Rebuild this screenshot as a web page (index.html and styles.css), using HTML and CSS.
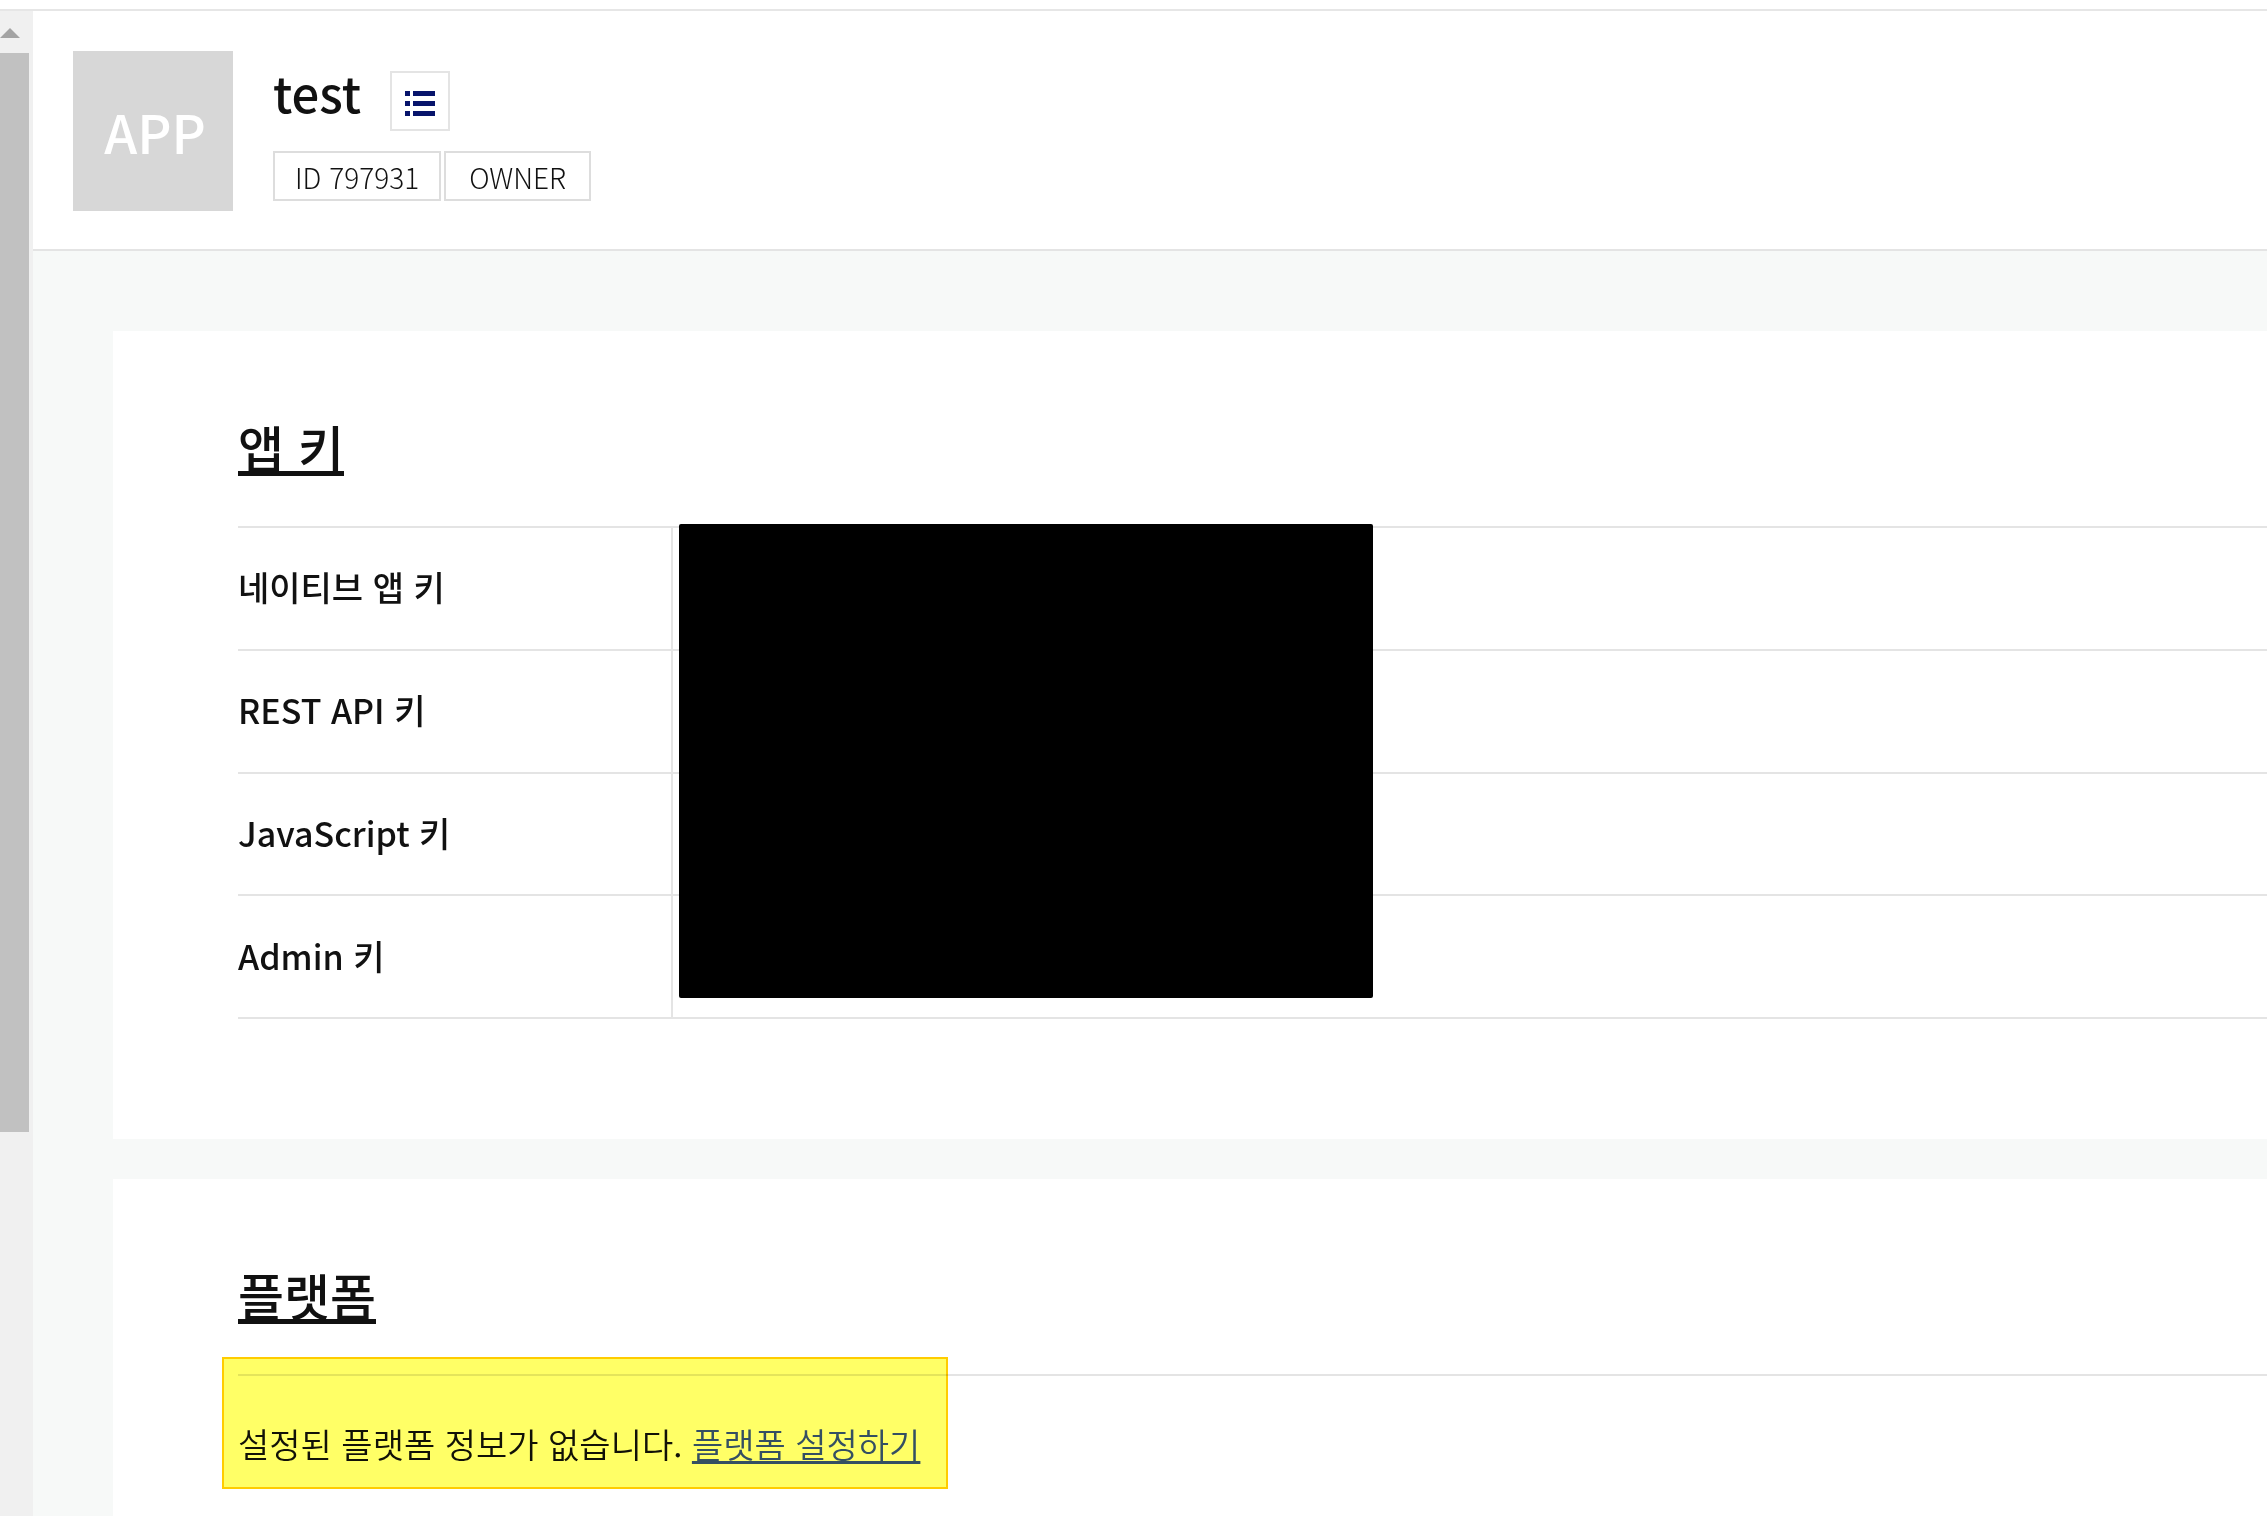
FILE: index.html
```html
<!DOCTYPE html>
<html lang="ko">
<head>
    <meta charset="UTF-8">
    <meta name="viewport" content="width=device-width, initial-scale=1.0">
    <title>test</title>
    <link rel="stylesheet" href="styles.css">
</head>
<body>
    <div class="topbar"></div>
    <div class="layout">
        <!-- Scroll track of the side menu -->
        <div class="scroll-track">
            <svg class="scroll-arrow" viewBox="0 0 20 10" width="20" height="10"><path d="M0 10 L10 0 L20 10 Z" fill="#a3a3a3"/></svg>
            <div class="scroll-thumb"></div>
        </div>

        <div class="content">
            <header class="app-header">
                <div class="app-icon">APP</div>
                <div class="app-info">
                    <div class="title-row">
                        <h1>test</h1>
                        <button type="button" class="list-btn" aria-label="앱 목록">
                            <svg viewBox="0 0 30 25" width="30" height="25" fill="#07146b">
                                <path d="M0 0h5v5H0zM8 0h22v5H8zM0 10h5v5H0zM8 10h22v5H8zM0 20h5v5H0zM8 20h22v5H8z"/>
                            </svg>
                        </button>
                    </div>
                    <div class="badges">
                        <span class="badge">ID 797931</span>
                        <span class="badge">OWNER</span>
                    </div>
                </div>
            </header>

            <main>
                <!-- App keys -->
                <section class="card">
                    <h2><a href="#keys">앱 키</a></h2>
                    <div class="key-box">
                        <table>
                            <tr><th scope="row">네이티브 앱 키</th><td></td></tr>
                            <tr><th scope="row">REST API 키</th><td></td></tr>
                            <tr><th scope="row">JavaScript 키</th><td></td></tr>
                            <tr><th scope="row">Admin 키</th><td></td></tr>
                        </table>
                        <div class="key-mask"></div>
                    </div>
                </section>

                <!-- Platform -->
                <section class="card card-last">
                    <h2><a href="#platform">플랫폼</a></h2>
                    <div class="platform">
                        <p class="notice">설정된 플랫폼 정보가 없습니다. <a href="#platform-setting">플랫폼 설정하기</a></p>
                    </div>
                </section>
            </main>
        </div>
    </div>
</body>
</html>
```
FILE: styles.css
```css
:root {
    --line-color: #e4e4e4;
    --text-color: #111111;
    --bg-color: #f7f9f8;
}

* {
    box-sizing: border-box;
}

body {
    font-family: 'Noto Sans CJK KR', 'Noto Sans', sans-serif;
    color: var(--text-color);
    background-color: #ffffff;
    margin: 0;
    min-height: 100vh;
    display: flex;
    flex-direction: column;
}

.topbar {
    height: 11px;
    border-bottom: 2px solid #e6e6e6;
}

.layout {
    display: flex;
    flex: 1;
}

.scroll-track {
    width: 33px;
    flex-shrink: 0;
    background-color: #f0f0f0;
    padding-top: 17px;
}

.scroll-arrow {
    display: block;
    margin-bottom: 15px;
}

.scroll-thumb {
    width: 29px;
    height: 1079px;
    background-color: #c1c1c1;
}

.content {
    flex: 1;
    display: flex;
    flex-direction: column;
    background-color: var(--bg-color);
}

/* Header */
.app-header {
    display: flex;
    gap: 40px;
    padding: 40px 40px 38px;
    background-color: #ffffff;
    border-bottom: 2px solid var(--line-color);
}

.app-icon {
    width: 160px;
    height: 160px;
    line-height: 160px;
    padding-left: 4px;
    background-color: #d7d7d7;
    color: #ffffff;
    font-size: 53px;
    font-weight: 500;
    text-align: center;
}

.app-info {
    padding-top: 11px;
}

.title-row {
    display: flex;
    align-items: flex-end;
    gap: 29px;
    height: 69px;
}

h1 {
    margin: 0;
    align-self: flex-start;
    font-size: 49px;
    line-height: 60px;
    font-weight: 500;
}

.list-btn {
    display: flex;
    align-items: center;
    justify-content: center;
    width: 60px;
    height: 60px;
    padding: 5px 0 0;
    border: 2px solid var(--line-color);
    background-color: #ffffff;
    cursor: pointer;
}

.badges {
    display: flex;
    gap: 3px;
    margin-top: 20px;
}

.badge {
    min-width: 147px;
    height: 50px;
    padding: 3px 20px 0;
    border: 2px solid #dddddd;
    font-size: 28px;
    line-height: 42px;
    font-weight: 300;
    text-align: center;
}

/* Cards */
main {
    flex: 1;
    display: flex;
    flex-direction: column;
    gap: 40px;
    padding: 80px 0 0 80px;
}

.card {
    background-color: #ffffff;
    padding: 85px 0 120px 125px;
}

.card-last {
    flex: 1;
    padding-bottom: 40px;
}

h2 {
    margin: 0 0 50px;
    font-size: 50px;
    line-height: 60px;
    font-weight: 500;
}

h2 a {
    color: inherit;
    text-decoration: underline;
    text-decoration-thickness: 5px;
    text-underline-offset: 3px;
    text-decoration-skip-ink: none;
}

.key-box {
    position: relative;
}

table {
    width: 100%;
    height: 493px;
    border-spacing: 0;
    border-top: 2px solid var(--line-color);
}

th,
td {
    padding: 0;
    border-bottom: 2px solid var(--line-color);
}

th {
    width: 435px;
    padding-bottom: 2px;
    border-right: 2px solid var(--line-color);
    font-size: 34px;
    line-height: 50px;
    font-weight: 500;
    text-align: left;
}

.key-mask {
    position: absolute;
    top: -2px;
    left: 441px;
    width: 694px;
    height: 474px;
    border-radius: 2px;
    background-color: #000000;
}

.platform {
    border-top: 2px solid var(--line-color);
}

.notice {
    position: relative;
    width: fit-content;
    margin: 0;
    padding-top: 43px;
    font-size: 34px;
    line-height: 50px;
    font-weight: 350;
}

.notice a {
    color: #344ff5;
    text-decoration: underline;
    text-decoration-thickness: 3px;
    text-underline-offset: 3px;
    text-decoration-skip-ink: none;
}

/* Marker over the notice */
.notice::after {
    content: '';
    position: absolute;
    inset: -19px -28px -20px -16px;
    border: 2px solid #ffcc00;
    background-color: #ffff66;
    mix-blend-mode: multiply;
    pointer-events: none;
}
```
